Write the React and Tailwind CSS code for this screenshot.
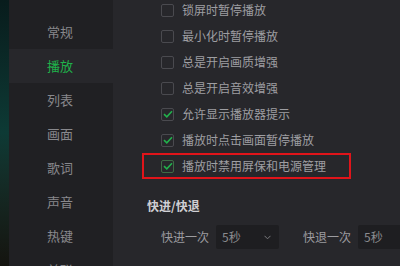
import React from "react";

const font = { fontFamily: '"Noto Sans CJK SC", "Noto Sans", sans-serif' };

const navItems = ["常规", "播放", "列表", "画面", "歌词", "声音", "热键", "关联"];

const rows = [
  { label: "锁屏时暂停播放", checked: false },
  { label: "最小化时暂停播放", checked: false },
  { label: "总是开启画质增强", checked: false },
  { label: "总是开启音效增强", checked: false },
  { label: "允许显示播放器提示", checked: true },
  { label: "播放时点击画面暂停播放", checked: true },
  { label: "播放时禁用屏保和电源管理", checked: true, highlight: true },
];

function Check({ checked, highlight }) {
  return (
    <div
      className={`w-[13px] h-[13px] rounded-[2px] border flex items-center justify-center ${
        highlight ? "border-[#3d6b45]" : "border-[#4a4a4f]"
      }`}
    >
      {checked && (
        <svg width="10" height="8" viewBox="0 0 10 8">
          <path d="M1 4.2 L3.8 6.8 L9 1.2" fill="none" stroke="#22b14c" strokeWidth="1.6" />
        </svg>
      )}
    </div>
  );
}

function Select({ wide }) {
  return (
    <div
      className={`h-[24px] ${wide ? "w-[63px]" : "w-[50px]"} bg-[#1e1e21] rounded-[2px] flex items-center justify-between pl-[6px] pr-[8px] text-[12px] text-[#8a8a8e]`}
    >
      <span>5秒</span>
      {wide && (
        <svg width="7" height="5" viewBox="0 0 7 5">
          <path d="M0.5 0.8 L3.5 3.8 L6.5 0.8" fill="none" stroke="#7a7a7e" strokeWidth="1" />
        </svg>
      )}
    </div>
  );
}

export default function App() {
  return (
    <div className="w-[400px] h-[266px] flex overflow-hidden bg-[#27272b]" style={font}>
      <div className="w-[9px] shrink-0 bg-gradient-to-b from-[#081c1c] via-[#0d3a35] to-[#14140f]" />
      <div className="w-[104px] shrink-0 bg-[#202023] pt-[15px] flex flex-col">
        {navItems.map((n) => (
          <div
            key={n}
            className={`h-[34px] shrink-0 flex items-center justify-center text-[13px] ${
              n === "播放" ? "bg-[#27272b] text-[#1fb14a]" : "text-[#88888c]"
            }`}
          >
            <span className="-ml-[2px]">{n}</span>
          </div>
        ))}
      </div>
      <div className="flex-1 bg-[#27272b] flex flex-col">
        <div className="-mt-[3px] flex flex-col">
          {rows.map((r) => (
            <div key={r.label} className="relative h-[26px] flex items-center pl-[48px]">
              <Check checked={r.checked} highlight={r.highlight} />
              <span className="ml-[8px] text-[12px] text-[#9e9ea2]">{r.label}</span>
              {r.highlight && (
                <div className="absolute left-[29px] top-0 w-[209px] h-[26px] border-2 border-[#e0141a]" />
              )}
            </div>
          ))}
        </div>
        <div className="pl-[34px] mt-[18px] text-[12px] font-bold text-[#cfcfd3]">快进/快退</div>
        <div className="flex items-center mt-[10px] pl-[48px]">
          <span className="text-[12px] text-[#9c9ca0] w-[55px]">快进一次</span>
          <Select wide />
          <span className="ml-[24px] text-[12px] text-[#9c9ca0] w-[55px]">快退一次</span>
          <Select />
        </div>
      </div>
    </div>
  );
}
